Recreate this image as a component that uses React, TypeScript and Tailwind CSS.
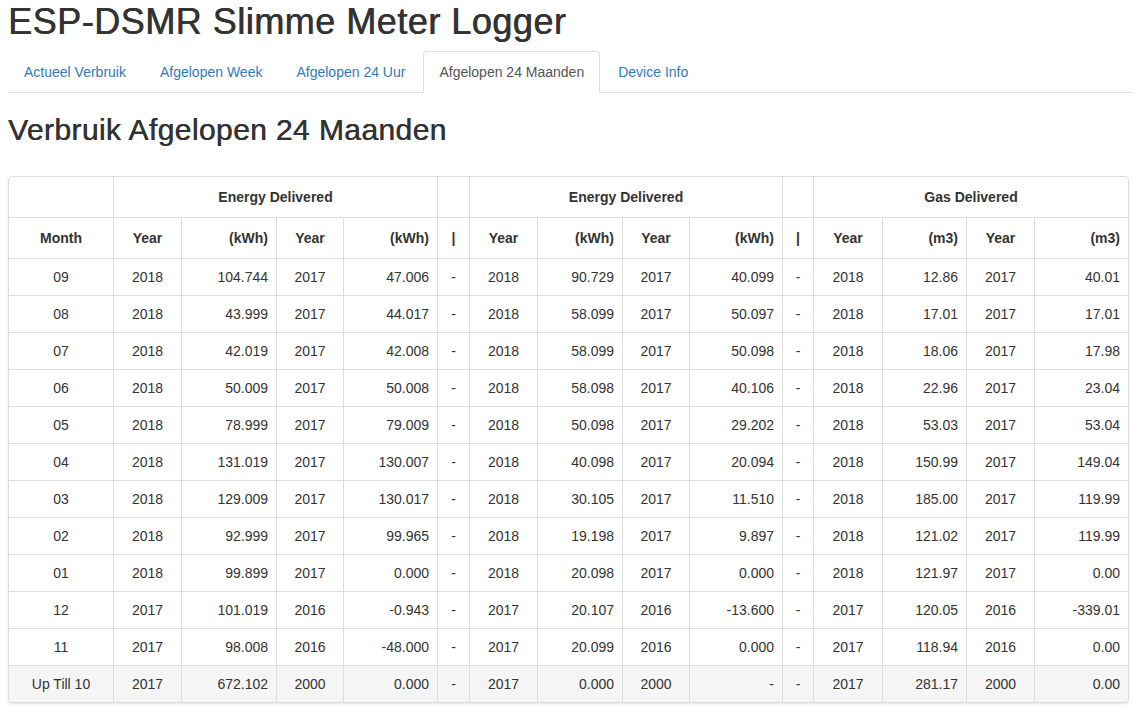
import React from "react";

const TABS = ["Actueel Verbruik", "Afgelopen Week", "Afgelopen 24 Uur", "Afgelopen 24 Maanden", "Device Info"];
const ACTIVE_TAB = 3;

// month, then 3 groups of [year, value, year, value]
const ROWS: string[][] = [
  ["09", "2018", "104.744", "2017", "47.006", "2018", "90.729", "2017", "40.099", "2018", "12.86", "2017", "40.01"],
  ["08", "2018", "43.999", "2017", "44.017", "2018", "58.099", "2017", "50.097", "2018", "17.01", "2017", "17.01"],
  ["07", "2018", "42.019", "2017", "42.008", "2018", "58.099", "2017", "50.098", "2018", "18.06", "2017", "17.98"],
  ["06", "2018", "50.009", "2017", "50.008", "2018", "58.098", "2017", "40.106", "2018", "22.96", "2017", "23.04"],
  ["05", "2018", "78.999", "2017", "79.009", "2018", "50.098", "2017", "29.202", "2018", "53.03", "2017", "53.04"],
  ["04", "2018", "131.019", "2017", "130.007", "2018", "40.098", "2017", "20.094", "2018", "150.99", "2017", "149.04"],
  ["03", "2018", "129.009", "2017", "130.017", "2018", "30.105", "2017", "11.510", "2018", "185.00", "2017", "119.99"],
  ["02", "2018", "92.999", "2017", "99.965", "2018", "19.198", "2017", "9.897", "2018", "121.02", "2017", "119.99"],
  ["01", "2018", "99.899", "2017", "0.000", "2018", "20.098", "2017", "0.000", "2018", "121.97", "2017", "0.00"],
  ["12", "2017", "101.019", "2016", "-0.943", "2017", "20.107", "2016", "-13.600", "2017", "120.05", "2016", "-339.01"],
  ["11", "2017", "98.008", "2016", "-48.000", "2017", "20.099", "2016", "0.000", "2017", "118.94", "2016", "0.00"],
  ["Up Till 10", "2017", "672.102", "2000", "0.000", "2017", "0.000", "2000", "-", "2017", "281.17", "2000", "0.00"],
];

function Cell({
  children,
  align = "center",
  bold = false,
  muted = false,
  span,
}: {
  children?: React.ReactNode;
  align?: "center" | "right";
  bold?: boolean;
  muted?: boolean;
  span?: "four";
}) {
  return (
    <div
      className={[
        "flex items-center px-2 leading-5",
        align === "right" ? "justify-end" : "justify-center",
        bold ? "font-bold" : "",
        muted ? "bg-[#f5f5f5]" : "bg-white",
        span === "four" ? "col-span-4" : "",
      ].join(" ")}
    >
      {children}
    </div>
  );
}

function Group({ values, muted, last }: { values: string[]; muted: boolean; last: boolean }) {
  return (
    <>
      <Cell muted={muted}>{values[0]}</Cell>
      <Cell muted={muted} align="right">{values[1]}</Cell>
      <Cell muted={muted}>{values[2]}</Cell>
      <Cell muted={muted} align="right">{values[3]}</Cell>
      {!last && <Cell muted={muted}>-</Cell>}
    </>
  );
}

export default function App() {
  return (
    <div className="min-h-screen bg-white px-2 font-['Liberation_Sans',Arial,sans-serif] text-[14px] text-[#333]">
      <h1 className="pt-[2px] text-[36px] leading-[40px] tracking-[0.5px] [text-shadow:0.6px_0_0_#333]">
        ESP-DSMR Slimme Meter Logger
      </h1>

      <nav className="mt-[9px] flex border-b border-[#ddd]">
        {TABS.map((t, i) => (
          <a
            key={t}
            className={
              i === ACTIVE_TAB
                ? "-mb-px mr-[2px] rounded-t-[4px] border border-[#ddd] border-b-white bg-white px-[15px] py-[10px] leading-5 text-[#555]"
                : "-mb-px mr-[2px] rounded-t-[4px] border border-transparent px-[15px] py-[10px] leading-5 text-[#337ab7]"
            }
          >
            {t}
          </a>
        ))}
      </nav>

      <h2 className="mt-5 mb-[30px] text-[30px] leading-[33px] tracking-[0.4px] [text-shadow:0.5px_0_0_#333]">
        Verbruik Afgelopen 24 Maanden
      </h2>

      <div className="w-[1121px] overflow-hidden rounded-[4px] border border-[#ddd] shadow-[0_1px_2px_rgba(0,0,0,0.12)]">
        <div className="grid grid-cols-[104px_67px_94px_66px_93px_31px_67px_84px_66px_92px_30px_68px_83px_67px_93px] auto-rows-[36px] [grid-template-rows:40px_40px] gap-px bg-[#ddd]">
          <Cell />
          <Cell bold span="four">Energy Delivered</Cell>
          <Cell />
          <Cell bold span="four">Energy Delivered</Cell>
          <Cell />
          <Cell bold span="four">Gas Delivered</Cell>

          <Cell bold>Month</Cell>
          <Cell bold>Year</Cell>
          <Cell bold align="right">(kWh)</Cell>
          <Cell bold>Year</Cell>
          <Cell bold align="right">(kWh)</Cell>
          <Cell bold>|</Cell>
          <Cell bold>Year</Cell>
          <Cell bold align="right">(kWh)</Cell>
          <Cell bold>Year</Cell>
          <Cell bold align="right">(kWh)</Cell>
          <Cell bold>|</Cell>
          <Cell bold>Year</Cell>
          <Cell bold align="right">(m3)</Cell>
          <Cell bold>Year</Cell>
          <Cell bold align="right">(m3)</Cell>

          {ROWS.map((r, ri) => {
            const muted = ri === ROWS.length - 1;
            return (
              <React.Fragment key={r[0]}>
                <Cell muted={muted}>{r[0]}</Cell>
                <Group values={r.slice(1, 5)} muted={muted} last={false} />
                <Group values={r.slice(5, 9)} muted={muted} last={false} />
                <Group values={r.slice(9, 13)} muted={muted} last />
              </React.Fragment>
            );
          })}
        </div>
      </div>
    </div>
  );
}
